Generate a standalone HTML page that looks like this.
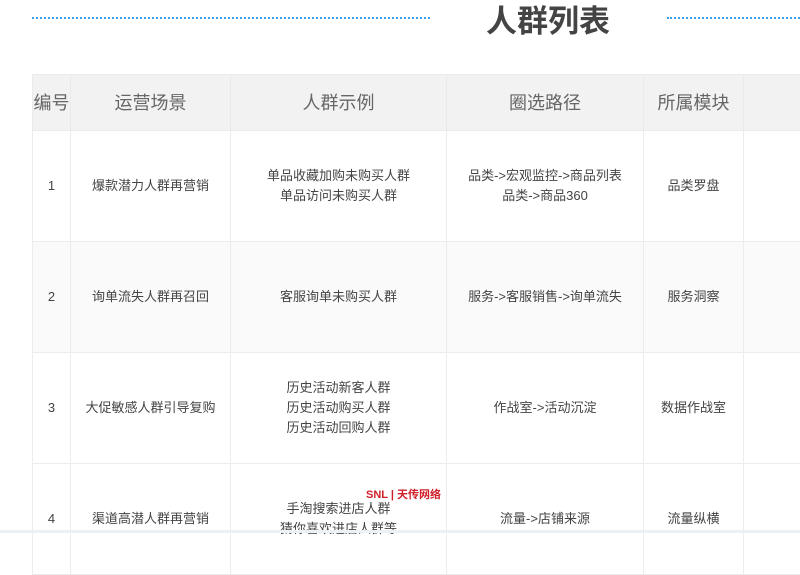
<!DOCTYPE html>
<html><head><meta charset="utf-8"><style>
body{margin:0;width:800px;height:533px;overflow:hidden;background:#fff;font-family:"Liberation Sans","Noto Sans CJK SC",sans-serif;position:relative}
.dot{position:absolute;top:17px;height:0;border-top:2px dotted #3aa0e8}
.title{position:absolute;left:470px;top:1px;width:156px;text-align:center;font-size:31px;font-weight:bold;color:#444;line-height:42px}
table{position:absolute;left:32px;top:74px;border-collapse:collapse;table-layout:fixed;width:840px}
td{border:1px solid #ececec;text-align:center;color:#444;font-size:13px;line-height:20px;padding:0}
tr.h td{background:#f2f2f2;height:55px;font-size:18px;color:#666;border-color:#eaeaea}
tr.r td{height:110px}
tr.g td{background:#fafafa}
.bar{position:absolute;left:0;top:530px;width:800px;height:3px;background:#eef1f4}
.wm{position:absolute;left:366px;top:486px;font-size:11px;font-weight:bold;color:#d0202a}
</style></head><body>
<div class="dot" style="left:32px;width:398px"></div>
<div class="dot" style="left:667px;width:133px"></div>
<div class="title">人群列表</div>
<table>
<colgroup><col style="width:38px"><col style="width:160px"><col style="width:216px"><col style="width:197px"><col style="width:100px"><col style="width:129px"></colgroup>
<tr class="h"><td>编号</td><td>运营场景</td><td>人群示例</td><td>圈选路径</td><td>所属模块</td><td></td></tr>
<tr class="r"><td>1</td><td>爆款潜力人群再营销</td><td>单品收藏加购未购买人群<br>单品访问未购买人群</td><td>品类->宏观监控->商品列表<br>品类->商品360</td><td>品类罗盘</td><td></td></tr>
<tr class="r g"><td>2</td><td>询单流失人群再召回</td><td>客服询单未购买人群</td><td>服务->客服销售->询单流失</td><td>服务洞察</td><td></td></tr>
<tr class="r"><td>3</td><td>大促敏感人群引导复购</td><td>历史活动新客人群<br>历史活动购买人群<br>历史活动回购人群</td><td>作战室->活动沉淀</td><td>数据作战室</td><td></td></tr>
<tr class="r"><td>4</td><td>渠道高潜人群再营销</td><td>手淘搜索进店人群<br>猜你喜欢进店人群等</td><td>流量->店铺来源</td><td>流量纵横</td><td></td></tr>
</table>
<div class="wm">SNL | 天传网络</div>
<div class="bar"></div>
</body></html>
